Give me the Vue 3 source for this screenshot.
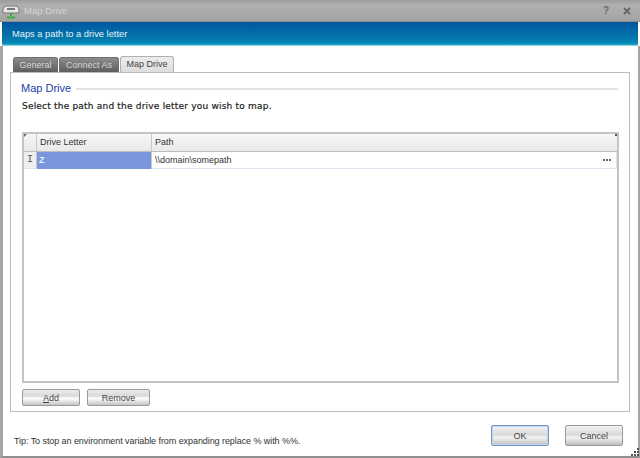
<template>
  <div class="win">
    <header class="title">
      <svg class="appicon" width="18" height="16" viewBox="0 0 18 16">
        <path d="M3 3h12l2 3v4H1V6z" fill="#e4e6e4" stroke="#777" />
        <rect x="5" y="5" width="8" height="2" fill="#777" />
        <path d="M9 10v3M5 14.500h8" stroke="#3fae3f" stroke-width="2" />
      </svg>
      <span class="title-text">Map Drive</span>
      <span class="spacer"></span>
      <span class="ctl">?</span>
      <svg class="closex" width="8" height="8" viewBox="0 0 8 8">
        <path d="M1 1l6 6M7 1L1 7" stroke="#666" stroke-width="1.800" />
      </svg>
    </header>
    <div class="banner">Maps a path to a drive letter</div>
    <main class="body">
      <nav class="tabs">
        <span class="tab dark t1">General</span>
        <span class="tab dark t2">Connect As</span>
        <span class="tab active">Map Drive</span>
      </nav>
      <section class="panel">
        <div class="legend"><span>Map Drive</span><i></i></div>
        <p class="desc">Select the path and the drive letter you wish to map.</p>
        <div class="grid">
          <div class="row head">
            <span class="c0"></span>
            <span class="c1">Drive Letter</span>
            <span class="c2">Path</span>
          </div>
          <div class="row data">
            <span class="c0 cursor">I</span>
            <span class="c1 sel">Z</span>
            <span class="c2 val"><span>\\domain\somepath</span><b class="dots"><i></i><i></i><i></i></b></span>
          </div>
        </div>
        <div class="actions">
          <button class="btn add"><u>A</u>dd</button>
          <button class="btn rem">Remove</button>
        </div>
      </section>
      <footer class="foot">
        <span class="tip">Tip: To stop an environment variable from expanding replace % with %%.</span>
        <button class="btn big ok">OK</button>
        <button class="btn big cancel">Cancel</button>
      </footer>
    </main>
    <svg class="grip" width="10" height="10" viewBox="0 0 10 10">
      <path d="M7 1h2v2H7zM4 4h2v2H4zM7 4h2v2H7zM1 7h2v2H1zM4 7h2v2H4zM7 7h2v2H7z" fill="#555" />
    </svg>
  </div>
</template>

<script setup>
</script>

<style>
html, body { margin: 0; background: #fff; }
</style>

<style scoped>
.win {
  position: relative;
  width: 640px;
  height: 458px;
  box-sizing: border-box;
  display: flex;
  flex-direction: column;
  font-family: "Liberation Sans", sans-serif;
  font-size: 9px;
  color: #333;
  background: #fff;
  overflow: hidden;
}
.title {
  height: 22px;
  flex: none;
  box-sizing: border-box;
  display: flex;
  align-items: center;
  padding: 0 9px 0 2px;
  background: linear-gradient(#9c9c9c, #b0b0b0 25%, #a4a4a4);
  border-bottom: 1px solid #8c8c8c;
}
.appicon { margin-right: 4px; }
.title-text {
  color: #d4d4d4;
  font-size: 9.5px;
}
.spacer { flex: 1; }
.ctl {
  color: #6c6c6c;
  font-weight: 700;
  font-size: 10px;
  margin-right: 14px;
}
.banner {
  height: 24px;
  flex: none;
  display: flex;
  align-items: center;
  box-sizing: border-box;
  padding-left: 10px;
  margin: 0 2px;
  color: #e4f1f8;
  font-size: 9.3px;
  background: linear-gradient(#00569f, #0479ad 70%, #0590bc 92%, #bfe6f2);
}
.body {
  flex: 1;
  display: flex;
  flex-direction: column;
  min-height: 0;
  border-left: 3px solid #a6a6a6;
  border-right: 2px solid #a6a6a6;
  border-bottom: 2px solid #8f8f8f;
  padding: 10px 8px 0 7px;
  background: #fff;
}
.tabs {
  height: 16px;
  flex: none;
  display: flex;
  padding-left: 3px;
  gap: 1px;
  align-items: flex-end;
}
.tab {
  box-sizing: border-box;
  text-align: center;
  border-radius: 3px 3px 0 0;
  white-space: nowrap;
}
.dark {
  height: 15px;
  line-height: 15px;
  color: #d5d5d5;
  background: linear-gradient(#8c8c8c, #5e5e5e);
  border: 1px solid #6e6e6e;
  border-bottom: 0;
}
.t1 { width: 45px; }
.t2 { width: 60px; }
.active {
  width: 54px;
  height: 16px;
  line-height: 15px;
  color: #444;
  background: linear-gradient(#ececec, #dedede);
  border: 1px solid #b0b0b0;
  border-bottom: 0;
}
.panel {
  height: 340px;
  flex: none;
  box-sizing: border-box;
  border: 1px solid #bdbdbd;
  padding: 0 10px 0 11px;
  display: flex;
  flex-direction: column;
}
.legend {
  margin-top: 8px;
  height: 14px;
  margin-left: -1px;
  display: flex;
  align-items: center;
  color: #2440a8;
  font-size: 11px;
}
.legend i {
  flex: 1;
  height: 2px;
  background: #e3e3e3;
  margin: 1px 1px 0 5px;
}
.desc {
  margin: 4px 0 0;
  height: 14px;
  line-height: 14px;
  font-family: "DejaVu Sans", sans-serif;
  font-size: 9px;
  color: #222;
  letter-spacing: 0.2px;
  -webkit-text-stroke: 0.2px #222;
}
.grid {
  margin-top: 19px;
  height: 251px;
  box-sizing: border-box;
  border: 2px solid #c4c4c4;
  background: #fff;
  position: relative;
}
.grid::before {
  content: "";
  position: absolute;
  left: 0;
  top: 0;
  border-top: 3px solid #666;
  border-right: 3px solid transparent;
}
.grid::after {
  content: "";
  position: absolute;
  right: 0;
  top: 0;
  width: 2px;
  height: 2px;
  background: #555;
}
.row { display: flex; box-sizing: border-box; }
.head {
  height: 18px;
  line-height: 17px;
  background: linear-gradient(#f7f7f7, #e9e9e9);
  border-bottom: 1px solid #bdbdbd;
}
.data {
  height: 17px;
  line-height: 16px;
  border-bottom: 1px solid #dce3ef;
}
.c0 {
  width: 13px;
  flex: none;
  box-sizing: border-box;
  border-right: 1px solid #c8c8c8;
  background: #eee;
}
.head .c0 { background: none; }
.cursor {
  text-align: center;
  font-family: "Liberation Mono", monospace;
  font-size: 10px;
  color: #555;
}
.c1 {
  width: 115px;
  flex: none;
  box-sizing: border-box;
  border-right: 1px solid #c8c8c8;
  padding-left: 3px;
}
.c2 {
  flex: 1;
  padding-left: 3px;
}
.sel {
  background: #7995dd;
  color: #e8eefc;
  padding-left: 2px;
  font-weight: 700;
  margin-bottom: -1px;
}
.val {
  display: flex;
  justify-content: space-between;
  align-items: center;
  border-right: 1px solid #dce3ef;
  padding-right: 5px;
}
.dots { display: flex; gap: 1px; }
.dots i { width: 2px; height: 2px; background: #666; }
.actions {
  margin-top: 6px;
  display: flex;
  gap: 7px;
}
.btn {
  box-sizing: border-box;
  height: 17px;
  padding: 0;
  font: inherit;
  color: #444;
  border: 1px solid #9a9a9a;
  border-radius: 2px;
  background: linear-gradient(#ececec, #d9d9d9 40%, #fff 55%, #c4c4c4);
}
.add { width: 58px; }
.rem { width: 63px; }
.foot {
  flex: 1;
  display: flex;
  align-items: flex-end;
  padding-bottom: 9px;
  padding-left: 4px;
  padding-right: 6px;
}
.tip {
  flex: 1;
  color: #333;
  line-height: 12px;
  letter-spacing: -0.07px;
}
.big {
  width: 58px;
  height: 21px;
  margin-bottom: 1px;
  margin-left: 16px;
  background: linear-gradient(#f2f2f2, #dadada 45%, #f2f2f2 60%, #bfbfbf);
}
.ok {
  border: 1px solid #6d9ac4;
  box-shadow: inset 0 0 0 1px #bcd8ee;
}
.cancel { margin-right: 1px; }
.grip { position: absolute; right: 0; bottom: 1px; }
</style>
